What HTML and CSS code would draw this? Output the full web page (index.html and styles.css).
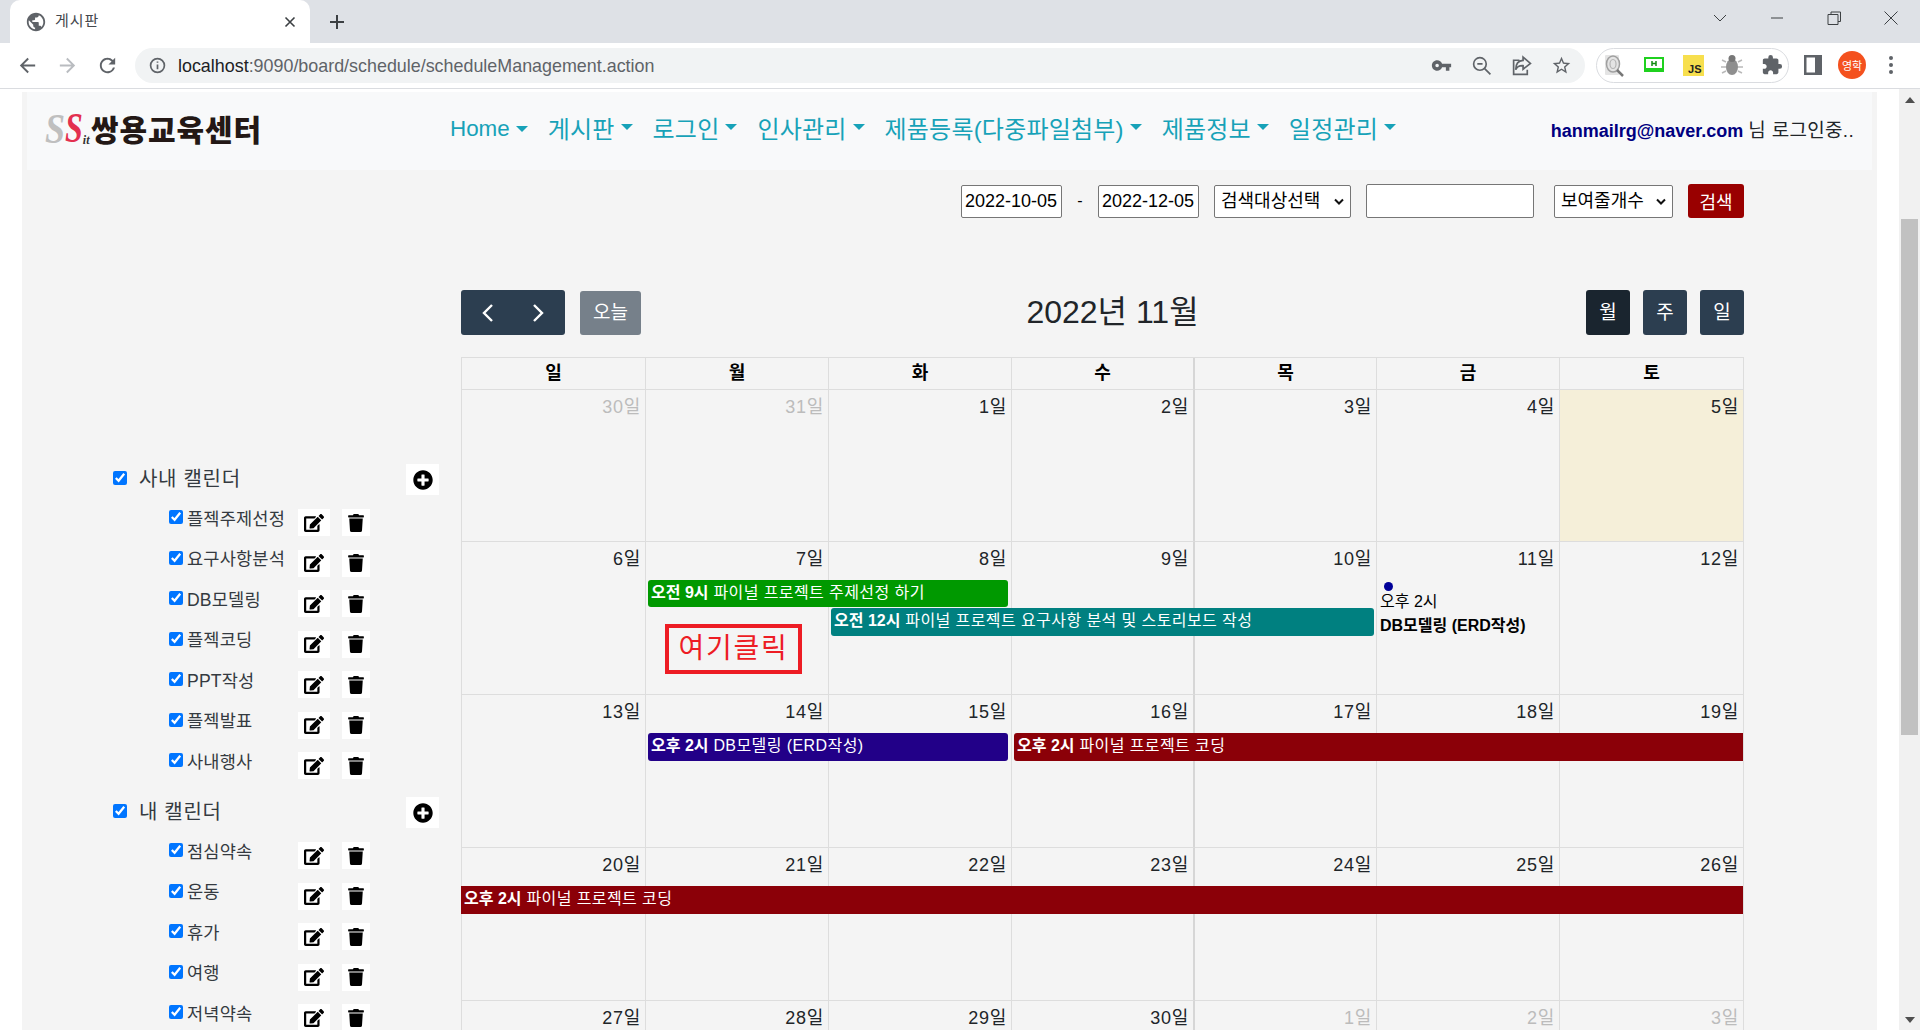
FILE: index.html
```html
<!DOCTYPE html>
<html lang="ko">
<head>
<meta charset="utf-8">
<title>게시판</title>
<link rel="stylesheet" href="styles.css">
</head>
<body>
<svg class="defs" width="0" height="0" aria-hidden="true">
  <symbol id="i-edit" viewBox="0 0 576 512"><path d="M402.6 83.2l90.2 90.2c3.8 3.8 3.8 10 0 13.8L274.4 405.6l-92.8 10.3c-12.4 1.4-22.9-9.1-21.5-21.5l10.3-92.8L388.8 83.2c3.8-3.8 10-3.8 13.8 0zm162-22.9l-48.8-48.8c-15.2-15.2-39.9-15.2-55.2 0l-35.4 35.4c-3.8 3.8-3.8 10 0 13.8l90.2 90.2c3.8 3.8 10 3.8 13.8 0l35.4-35.4c15.2-15.3 15.2-40 0-55.2zM384 346.2V448H64V128h229.8c3.2 0 6.2-1.3 8.5-3.5l40-40c7.6-7.6 2.2-20.5-8.5-20.5H48C21.5 64 0 85.5 0 112v352c0 26.5 21.5 48 48 48h352c26.5 0 48-21.5 48-48V306.2c0-10.7-12.9-16-20.5-8.5l-40 40c-2.2 2.3-3.5 5.3-3.5 8.5z"/></symbol>
  <symbol id="i-trash" viewBox="0 0 448 512"><path d="M432 32H312l-9.4-18.7A24 24 0 0 0 281.1 0H166.8a23.72 23.72 0 0 0-21.4 13.3L136 32H16A16 16 0 0 0 0 48v32a16 16 0 0 0 16 16h416a16 16 0 0 0 16-16V48a16 16 0 0 0-16-16zM53.2 467a48 48 0 0 0 47.9 45h245.8a48 48 0 0 0 47.9-45L416 128H32z"/></symbol>
  <symbol id="i-plus" viewBox="0 0 512 512"><path d="M256 8C119 8 8 119 8 256s111 248 248 248 248-111 248-248S393 8 256 8zm144 276c0 6.6-5.4 12-12 12h-92v92c0 6.6-5.4 12-12 12h-56c-6.6 0-12-5.4-12-12v-92h-92c-6.6 0-12-5.4-12-12v-56c0-6.6 5.4-12 12-12h92v-92c0-6.6 5.4-12 12-12h56c6.6 0 12 5.4 12 12v92h92c6.6 0 12 5.4 12 12v56z"/></symbol>
</svg>

<header class="chrome">
  <div class="tabstrip">
    <div class="tab">
      <svg class="favicon" viewBox="0 0 24 24"><path d="M12 2C6.48 2 2 6.48 2 12s4.48 10 10 10 10-4.48 10-10S17.52 2 12 2zm-1 17.93c-3.95-.49-7-3.85-7-7.93 0-.62.08-1.21.21-1.79L9 15v1c0 1.1.9 2 2 2v1.93zm6.9-2.54c-.26-.81-1-1.39-1.9-1.39h-1v-3c0-.55-.45-1-1-1H8v-2h2c.55 0 1-.45 1-1V7h2c1.1 0 2-.9 2-2v-.41c2.93 1.19 5 4.06 5 7.41 0 2.08-.8 3.97-2.1 5.39z"/></svg>
      <span class="tab-title">게시판</span>
      <svg class="tab-close" viewBox="0 0 12 12"><path d="M1.5 1.5l9 9m0-9l-9 9"/></svg>
    </div>
    <svg class="new-tab" viewBox="0 0 16 16"><path d="M8 1v14M1 8h14"/></svg>
    <div class="win">
      <svg class="win-i" viewBox="0 0 16 16"><path d="M2 5l6 6 6-6"/></svg>
      <svg class="win-i" viewBox="0 0 16 16"><path d="M2 8h12"/></svg>
      <svg class="win-i" viewBox="0 0 16 16"><path d="M2 4.5h10v10H2zM5 4.500V2h9.500v9.500H12"/></svg>
      <svg class="win-i" viewBox="0 0 16 16"><path d="M1.500 1.500l13 13m0-13l-13 13"/></svg>
    </div>
  </div>
  <div class="toolbar">
    <svg class="nav-i" viewBox="0 0 24 24"><path d="M20 11H7.830l5.590-5.590L12 4l-8 8 8 8 1.410-1.410L7.830 13H20v-2z"/></svg>
    <svg class="nav-i off" viewBox="0 0 24 24"><path d="M4 11h12.170l-5.590-5.590L12 4l8 8-8 8-1.410-1.410L16.170 13H4v-2z"/></svg>
    <svg class="nav-i" viewBox="0 0 24 24"><path d="M17.650 6.350A7.960 7.960 0 0 0 12 4c-4.420 0-7.990 3.580-7.990 8s3.570 8 7.990 8c3.730 0 6.840-2.550 7.730-6h-2.080A5.990 5.990 0 0 1 12 18c-3.310 0-6-2.690-6-6s2.690-6 6-6c1.660 0 3.140.690 4.220 1.780L13 11h7V4l-2.350 2.350z"/></svg>
    <div class="omnibox">
      <svg class="info" viewBox="0 0 16 16"><circle cx="8" cy="8" r="6.500"/><path d="M8 7v4.500M8 4.200v1.300"/></svg>
      <span class="url"><b>localhost</b>:9090/board/schedule/scheduleManagement.action</span>
      <svg class="omni-i omni-first" viewBox="0 0 24 24"><path d="M12.650 10A6 6 0 0 0 7 6c-3.310 0-6 2.690-6 6s2.690 6 6 6a6 6 0 0 0 5.650-4H17v4h4v-4h2v-4H12.650zM7 14c-1.100 0-2-.9-2-2s.9-2 2-2 2 .9 2 2-.9 2-2 2z"/></svg>
      <svg class="omni-s" viewBox="0 0 20 20"><circle cx="8.500" cy="8.500" r="6"/><path d="M13 13l5.500 5.500M6 8.500h5"/></svg>
      <svg class="omni-s" viewBox="0 0 20 20"><path d="M8 5H2.500v13.500h13V14M11.500 2l7 6-7 5.500V10.200C7.500 10 5.500 11.500 4.500 14c0-5 2.500-8.500 7-8.800z"/></svg>
      <svg class="omni-i" viewBox="0 0 24 24"><path d="M22 9.240l-7.190-.62L12 2 9.190 8.630 2 9.240l5.460 4.730L5.820 21 12 17.270 18.180 21l-1.630-7.030L22 9.240zM12 15.400l-3.760 2.270 1-4.280-3.320-2.880 4.380-.38L12 6.100l1.710 4.040 4.380.38-3.320 2.880 1 4.280L12 15.400z"/></svg>
    </div>
    <div class="ext-pill">
      <svg class="ext" viewBox="0 0 22 24"><rect x="2" y="2" width="14" height="20" rx="1" fill="#e4e4e4"/><ellipse cx="10" cy="11" rx="6.500" ry="8" fill="none" stroke="#a0a0a0" stroke-width="1.500"/><ellipse cx="10" cy="11" rx="3" ry="4.500" fill="none" stroke="#b5b5b5" stroke-width="1.200"/><path d="M14 17l6 6" stroke="#777" stroke-width="2.500"/></svg>
      <svg class="ext" viewBox="0 0 22 24"><rect x="2" y="5" width="18" height="13" fill="#fff" stroke="#1fd11f" stroke-width="2"/><rect x="2" y="15" width="18" height="3" fill="#1fd11f"/><path d="M9 8v5m4-5v5M9 10.500h4" stroke="#128a12" stroke-width="1.500"/></svg>
      <span class="js">JS</span>
      <svg class="ext" viewBox="0 0 22 24"><ellipse cx="11" cy="14" rx="6" ry="8" fill="#8f8f8f"/><circle cx="11" cy="5.500" r="3.500" fill="#777"/><path d="M5 9L1 7m4 7H0m5 4l-4 2m16-11l4-2m-4 7h5m-5 4l4 2" stroke="#b9b9b9" stroke-width="1.500"/></svg>
      <svg class="ext" viewBox="0 0 24 24"><path fill="#5f6368" d="M20.500 11H19V7c0-1.100-.9-2-2-2h-4V3.500a2.500 2.500 0 0 0-5 0V5H4c-1.100 0-1.990.9-1.990 2v3.800H3.500c1.490 0 2.700 1.210 2.700 2.700s-1.210 2.700-2.700 2.700H2V20c0 1.100.9 2 2 2h3.800v-1.500c0-1.490 1.210-2.700 2.700-2.700 1.490 0 2.700 1.210 2.700 2.700V22H17c1.100 0 2-.9 2-2v-4h1.500a2.500 2.500 0 0 0 0-5z"/></svg>
    </div>
    <svg class="side-i" viewBox="0 0 18 20"><path fill-rule="evenodd" d="M0 0h18v20H0zM2.500 2.500v15H11v-15z"/></svg>
    <span class="avatar">영학</span>
    <svg class="dots" viewBox="0 0 4 20"><circle cx="2" cy="3" r="2"/><circle cx="2" cy="10" r="2"/><circle cx="2" cy="17" r="2"/></svg>
  </div>
</header>

<div class="viewport">
  <div class="page">
    <div class="container">
      <nav class="navbar">
        <a class="brand">
          <span class="brand-mark"><i class="s1">S</i><i class="s2">S</i><i class="s3">it</i></span>
          <span class="brand-name">쌍용교육센터</span>
        </a>
        <ul class="menu">
          <li class="menu-item">Home</li>
          <li class="menu-item">게시판</li>
          <li class="menu-item">로그인</li>
          <li class="menu-item">인사관리</li>
          <li class="menu-item">제품등록(다중파일첨부)</li>
          <li class="menu-item">제품정보</li>
          <li class="menu-item">일정관리</li>
        </ul>
        <div class="login"><b>hanmailrg@naver.com</b> <span class="login-t">님 로그인중..</span></div>
      </nav>

      <form class="search">
        <input class="ctl date" type="text" value="2022-10-05">
        <span class="dash">-</span>
        <input class="ctl date" type="text" value="2022-12-05">
        <select class="ctl sel sel-a"><option>검색대상선택</option></select>
        <input class="ctl word" type="text">
        <select class="ctl sel sel-b"><option>보여줄개수</option></select>
        <button class="go" type="button">검색</button>
      </form>

      <div class="main">
        <aside class="side">
          <section class="group">
            <div class="group-head">
              <label class="group-label"><input type="checkbox" checked>사내 캘린더</label>
              <span class="box box-plus"><svg class="ic-plus"><use href="#i-plus"/></svg></span>
            </div>
            <div class="item"><label class="item-label"><input type="checkbox" checked>플젝주제선정</label><span class="box box-edit"><svg class="ic-edit"><use href="#i-edit"/></svg></span><span class="box box-trash"><svg class="ic-trash"><use href="#i-trash"/></svg></span></div>
            <div class="item"><label class="item-label"><input type="checkbox" checked>요구사항분석</label><span class="box box-edit"><svg class="ic-edit"><use href="#i-edit"/></svg></span><span class="box box-trash"><svg class="ic-trash"><use href="#i-trash"/></svg></span></div>
            <div class="item"><label class="item-label"><input type="checkbox" checked>DB모델링</label><span class="box box-edit"><svg class="ic-edit"><use href="#i-edit"/></svg></span><span class="box box-trash"><svg class="ic-trash"><use href="#i-trash"/></svg></span></div>
            <div class="item"><label class="item-label"><input type="checkbox" checked>플젝코딩</label><span class="box box-edit"><svg class="ic-edit"><use href="#i-edit"/></svg></span><span class="box box-trash"><svg class="ic-trash"><use href="#i-trash"/></svg></span></div>
            <div class="item"><label class="item-label"><input type="checkbox" checked>PPT작성</label><span class="box box-edit"><svg class="ic-edit"><use href="#i-edit"/></svg></span><span class="box box-trash"><svg class="ic-trash"><use href="#i-trash"/></svg></span></div>
            <div class="item"><label class="item-label"><input type="checkbox" checked>플젝발표</label><span class="box box-edit"><svg class="ic-edit"><use href="#i-edit"/></svg></span><span class="box box-trash"><svg class="ic-trash"><use href="#i-trash"/></svg></span></div>
            <div class="item"><label class="item-label"><input type="checkbox" checked>사내행사</label><span class="box box-edit"><svg class="ic-edit"><use href="#i-edit"/></svg></span><span class="box box-trash"><svg class="ic-trash"><use href="#i-trash"/></svg></span></div>
          </section>
          <section class="group group-next">
            <div class="group-head">
              <label class="group-label"><input type="checkbox" checked>내 캘린더</label>
              <span class="box box-plus"><svg class="ic-plus"><use href="#i-plus"/></svg></span>
            </div>
            <div class="item"><label class="item-label"><input type="checkbox" checked>점심약속</label><span class="box box-edit"><svg class="ic-edit"><use href="#i-edit"/></svg></span><span class="box box-trash"><svg class="ic-trash"><use href="#i-trash"/></svg></span></div>
            <div class="item"><label class="item-label"><input type="checkbox" checked>운동</label><span class="box box-edit"><svg class="ic-edit"><use href="#i-edit"/></svg></span><span class="box box-trash"><svg class="ic-trash"><use href="#i-trash"/></svg></span></div>
            <div class="item"><label class="item-label"><input type="checkbox" checked>휴가</label><span class="box box-edit"><svg class="ic-edit"><use href="#i-edit"/></svg></span><span class="box box-trash"><svg class="ic-trash"><use href="#i-trash"/></svg></span></div>
            <div class="item"><label class="item-label"><input type="checkbox" checked>여행</label><span class="box box-edit"><svg class="ic-edit"><use href="#i-edit"/></svg></span><span class="box box-trash"><svg class="ic-trash"><use href="#i-trash"/></svg></span></div>
            <div class="item"><label class="item-label"><input type="checkbox" checked>저녁약속</label><span class="box box-edit"><svg class="ic-edit"><use href="#i-edit"/></svg></span><span class="box box-trash"><svg class="ic-trash"><use href="#i-trash"/></svg></span></div>
          </section>
        </aside>

        <section class="calendar">
          <div class="cal-bar">
            <div class="cal-left">
              <div class="pager">
                <svg class="chev" viewBox="0 0 12 20"><path d="M10 2L2 10l8 8"/></svg>
                <svg class="chev" viewBox="0 0 12 20"><path d="M2 2l8 8-8 8"/></svg>
              </div>
              <button class="today" type="button">오늘</button>
            </div>
            <h2 class="cal-title">2022년 11월</h2>
            <div class="views">
              <button class="view view-on" type="button">월</button>
              <button class="view" type="button">주</button>
              <button class="view" type="button">일</button>
            </div>
          </div>

          <div class="grid">
            <div class="cols head">
              <div class="th">일</div><div class="th">월</div><div class="th">화</div><div class="th th-mid">수</div><div class="th">목</div><div class="th">금</div><div class="th">토</div>
            </div>

            <div class="week cols">
              <div class="td off">30일</div><div class="td off">31일</div><div class="td">1일</div><div class="td td-mid">2일</div><div class="td">3일</div><div class="td">4일</div><div class="td sat">5일</div>
            </div>

            <div class="week cols">
              <div class="td">6일</div><div class="td">7일</div><div class="td">8일</div><div class="td td-mid">9일</div><div class="td">10일</div><div class="td">11일</div><div class="td">12일</div>
              <div class="events cols">
                <div class="ev ev-green ev-row1 c2-3">오전 9시<span class="ev-t"> 파이널 프로젝트 주제선정 하기</span></div>
                <div class="ev ev-teal ev-row2 c3-6">오전 12시<span class="ev-t"> 파이널 프로젝트 요구사항 분석 및 스토리보드 작성</span></div>
                <div class="dot-ev c6">
                  <i class="dot"></i>
                  <span class="dot-time">오후 2시</span>
                  <b class="dot-title">DB모델링 (ERD작성)</b>
                </div>
                <div class="callout">여기클릭</div>
              </div>
            </div>

            <div class="week cols">
              <div class="td">13일</div><div class="td">14일</div><div class="td">15일</div><div class="td td-mid">16일</div><div class="td">17일</div><div class="td">18일</div><div class="td">19일</div>
              <div class="events cols">
                <div class="ev ev-purple ev-low c2-3">오후 2시<span class="ev-t"> DB모델링 (ERD작성)</span></div>
                <div class="ev ev-red ev-low ev-open c4-7">오후 2시<span class="ev-t"> 파이널 프로젝트 코딩</span></div>
              </div>
            </div>

            <div class="week cols">
              <div class="td">20일</div><div class="td">21일</div><div class="td">22일</div><div class="td td-mid">23일</div><div class="td">24일</div><div class="td">25일</div><div class="td">26일</div>
              <div class="events cols">
                <div class="ev ev-red ev-low ev-full c1-7">오후 2시<span class="ev-t"> 파이널 프로젝트 코딩</span></div>
              </div>
            </div>

            <div class="week cols">
              <div class="td">27일</div><div class="td">28일</div><div class="td">29일</div><div class="td td-mid">30일</div><div class="td off">1일</div><div class="td off">2일</div><div class="td off">3일</div>
            </div>
          </div>
        </section>
      </div>
    </div>
  </div>
  <div class="scrollbar">
    <span class="arrow-up"></span>
    <div class="thumb"></div>
    <span class="arrow-down"></span>
  </div>
</div>
</body>
</html>
```

FILE: styles.css
```css
* { box-sizing: border-box; }
html, body { margin: 0; height: 1030px; overflow: hidden; }
body {
  display: flex;
  flex-direction: column;
  background: #fff;
  color: #000;
  font-family: "Liberation Sans", "Noto Sans CJK KR", sans-serif;
  font-size: 16px;
}
.defs { position: absolute; }

/* browser chrome */
.chrome { flex: none; }
.tabstrip { height: 43px; background: #dee1e6; display: flex; align-items: flex-start; padding-left: 10px; }
.tab { width: 300px; height: 43px; background: #fff; border-radius: 10px 10px 0 0; display: flex; align-items: center; padding: 0 14px 0 15px; }
.favicon { width: 22px; height: 22px; fill: #5f6368; flex: none; }
.tab-title { margin-left: 8px; font-size: 15px; color: #45484d; flex: 1; letter-spacing: 1px; margin-top: -5px; }
.tab-close { width: 12px; height: 12px; fill: none; stroke: #3c4043; stroke-width: 1.6; }
.new-tab { width: 16px; height: 16px; margin: 14px 0 0 19px; fill: none; stroke: #3c4043; stroke-width: 2; flex: none; }
.win { margin-left: auto; display: flex; padding-right: 21px; padding-top: 10px; }
.win-i { width: 16px; height: 16px; fill: none; stroke: #3c4043; stroke-width: 1; margin-left: 41px; }

.toolbar { height: 46px; background: #fff; border-bottom: 1px solid #dadce0; display: flex; align-items: center; padding-left: 16px; padding-bottom: 1px; }
.nav-i { width: 23px; height: 23px; fill: #5f6368; margin-right: 17px; flex: none; }
.nav-i.off { fill: #b9bcc0; }
.omnibox { width: 1450px; height: 35px; border-radius: 18px; background: #f1f3f4; display: flex; align-items: center; padding-left: 14px; margin-left: -1px; flex: none; }
.info { width: 17px; height: 17px; fill: none; stroke: #5f6368; stroke-width: 1.6; flex: none; }
.url { margin-left: 12px; font-size: 17.9px; color: #5f6368; white-space: nowrap; position: relative; top: 1px; }
.url b { font-weight: 400; color: #202124; }
.omni-i { width: 21px; height: 21px; fill: #5f6368; flex: none; margin-left: 19px; }
.omni-first { margin-left: auto; }
.omni-s { width: 21px; height: 21px; fill: none; stroke: #5f6368; stroke-width: 1.6; flex: none; margin-left: 19px; }
.omni-i:last-child { margin-right: 13px; }
.ext-pill { width: 193px; height: 35px; margin-left: 11px; border: 1px solid #dadce0; border-radius: 18px; display: flex; align-items: center; justify-content: space-between; padding: 0 5px 0 6px; flex: none; }
.ext { width: 22px; height: 24px; flex: none; }
.js { width: 21px; height: 21px; background: #f7df4e; font-size: 11px; font-weight: 700; color: #222; display: flex; align-items: flex-end; justify-content: flex-end; padding-right: 2px; line-height: 14px; flex: none; }
.side-i { width: 18px; height: 20px; fill: #5f6368; margin-left: 15px; flex: none; }
.avatar { width: 28px; height: 28px; border-radius: 50%; background: #f4511e; color: #fff; font-size: 11px; display: flex; align-items: center; justify-content: center; margin-left: 16px; flex: none; }
.dots { width: 4px; height: 20px; fill: #5f6368; margin-left: 23px; flex: none; }

/* page */
.viewport { flex: 1; display: flex; min-height: 0; }
.page { flex: 1; min-width: 0; padding: 3px 22px 0; overflow: hidden; }
.container { height: 100%; background: #f4f4f4; padding: 0 5px; overflow: hidden; }

.navbar { height: 78px; background: #f8f9fa; display: flex; align-items: center; position: relative; }
.brand { display: flex; align-items: center; margin-left: 18px; width: 405px; flex: none; }
.brand-mark { display: flex; align-items: flex-end; width: 46px; height: 32px; font-family: "Liberation Serif", serif; font-weight: 700; line-height: 30px; flex: none; }
.brand-mark i { display: block; }
.s1 { font-size: 36px; color: #bfbfbf; transform: scaleY(1.2); transform-origin: 50% 100%; }
.s2 { font-size: 32px; color: #e3304f; transform: scaleY(1.35); transform-origin: 50% 100%; }
.s3 { font-size: 12px; color: #333; line-height: 14px; }
.brand-name { font-size: 30px; font-weight: 900; color: #231815; letter-spacing: .9px; line-height: 32px; white-space: nowrap; }
.menu { list-style: none; margin: 0; padding: 0; display: flex; font-size: 24px; color: #17a2b8; position: relative; top: -4px; }
.menu-item { display: flex; align-items: center; margin-right: 20px; letter-spacing: .2px; white-space: nowrap; }
.menu-item:first-child { letter-spacing: 0; font-size: 22.4px; padding-top: 4px; }
.menu-item::after { content: ""; margin-left: 6px; border-top: 6.7px solid #17a2b8; border-left: 6.7px solid transparent; border-right: 6.700px solid transparent; }
.login { margin-left: auto; margin-right: 18px; font-size: 18px; white-space: nowrap; position: relative; top: -3px; color: #212529; }
.login b { color: #000080; }
.login-t { font-size: 19px; letter-spacing: .3px; }

.search { display: flex; align-items: center; height: 34px; margin: 14px 128px 0 0; justify-content: flex-end; }
.ctl { font-family: inherit; font-size: 18px; height: 33px; border: 1px solid #767676; border-radius: 2px; background: #fff; color: #000; padding: 0 3px; flex: none; }
.date { width: 101px; }
.dash { width: 36px; text-align: center; font-size: 16px; flex: none; }
.sel {
  appearance: none;
  padding: 0 18px 0 6px;
  background: #fff url("data:image/svg+xml,%3Csvg xmlns='http://www.w3.org/2000/svg' width='10' height='7' viewBox='0 0 10 7'%3E%3Cpath d='M1 1.500l4 4 4-4' fill='none' stroke='%23111' stroke-width='2'/%3E%3C/svg%3E") no-repeat right 6px center;
}
.sel-a { width: 137px; margin-left: 15px; }
.word { width: 168px; margin-left: 15px; height: 34px; }
.sel-b { width: 119px; margin-left: 20px; }
.go { width: 56px; height: 34px; margin-left: 15px; border: 0; border-radius: 3px; background: #990000; color: #fff; font: inherit; font-size: 18px; flex: none; padding: 0; }

.main { display: flex; margin-top: 72px; }
.side { width: 434px; flex: none; padding: 174px 0 0 86px; }
.group-next { margin-top: 4.500px; }
.group-head { display: flex; height: 31px; margin-bottom: 14px; }
.group-label { display: flex; align-items: center; width: 293px; height: 27px; font-size: 20px; color: #343a40; letter-spacing: .7px; }
.group-label input { width: 14px; height: 14px; margin: 0 12px 0 0; }
.box { background: #fff; display: flex; align-items: center; justify-content: center; flex: none; }
.box-plus { width: 33px; height: 31px; }
.ic-plus { width: 20px; height: 20px; }
.item { height: 40.500px; display: flex; align-items: flex-start; padding-left: 56px; }
.item-label { width: 129px; height: 16px; display: flex; align-items: center; font-size: 17.6px; color: #343a40; flex: none; white-space: nowrap; letter-spacing: .15px; }
.item-label input { width: 14px; height: 14px; margin: 0 4px 0 0; flex: none; }
.box-edit { width: 32px; height: 27px; }
.box-trash { width: 28px; height: 27px; margin-left: 12px; }
.ic-edit { width: 20px; height: 18px; }
.ic-trash { width: 16px; height: 18px; }

.calendar { width: 1283px; flex: none; }
.cal-bar { display: flex; justify-content: space-between; align-items: flex-start; height: 67px; }
.cal-left { display: flex; align-items: flex-start; gap: 15px; width: 320px; }
.pager { width: 104px; height: 45px; background: #2c3e50; border-radius: 3px; display: flex; align-items: center; justify-content: space-between; padding: 0 21px; flex: none; }
.chev { width: 12px; height: 20px; fill: none; stroke: #fff; stroke-width: 2.4; }
.today { width: 61px; height: 44px; margin-top: 1px; border: 0; border-radius: 3px; background: #76808a; color: #fff; font: inherit; font-size: 19px; padding: 0 0 5px; flex: none; }
.cal-title { margin: 0; font-size: 32px; line-height: 45px; font-weight: 400; color: #212529; white-space: nowrap; }
.views { display: flex; gap: 13px; width: 300px; justify-content: flex-end; }
.view { width: 44px; height: 45px; border: 0; border-radius: 3px; background: #2c3e50; color: #fff; font: inherit; font-size: 19px; padding: 0 0 5px; }
.view-on { background: #1a252f; }

.grid { border-top: 1px solid #ddd; border-left: 1px solid #ddd; }
.cols { display: grid; grid-template-columns: 184px 183px 183px 183px 182px 183px 184px; }
.th { height: 32px; border-right: 1px solid #ddd; border-bottom: 1px solid #ddd; text-align: center; font-weight: 700; font-size: 18px; line-height: 30px; }
.th-mid, .td-mid { border-right-width: 2px !important; border-right-color: #d6d6d6 !important; }
.week { position: relative; height: 153px; }
.head + .week { height: 152px; }
.td { border-right: 1px solid #ddd; border-bottom: 1px solid #ddd; text-align: right; padding: 4px 4px 0 0; font-size: 18px; line-height: 26px; color: #212529; letter-spacing: .7px; }
.td.off { color: #bcbcbc; }
.td.sat { background: #f5efd9; }

.events { position: absolute; inset: 0 0 0 -1px; pointer-events: none; align-content: start; width: 1282px; }
.ev { height: 28px; border-radius: 3px; color: #fff; font-size: 16px; font-weight: 700; line-height: 26px; padding-left: 3px; white-space: nowrap; }
.ev-t { font-weight: 400; letter-spacing: .42px; }
.ev-row1 { grid-row: 1; margin: 38px 3px 0 3px; height: 27px; }
.ev-row2 { grid-row: 1; margin: 66px 2px 0 3px; }
.ev-low { grid-row: 1; margin: 38px 3px 0 3px; }
.ev-open { margin-right: 0; border-radius: 3px 0 0 3px; }
.ev-full { margin-left: 0; margin-right: 0; border-radius: 0; padding-left: 3px; }
.c2-3 { grid-column: 2 / 4; }
.c3-6 { grid-column: 3 / 6; }
.c4-7 { grid-column: 4 / 8; }
.c1-7 { grid-column: 1 / 8; }
.c6 { grid-column: 6; }
.ev-green { background: #009900; }
.ev-teal { background: #008080; }
.ev-purple { background: #220088; }
.ev-red { background: #8b0008; }

.dot-ev { grid-row: 1; margin: 40px 0 0 4px; display: flex; flex-direction: column; font-size: 16px; color: #000; }
.dot { width: 9px; height: 9px; border-radius: 50%; background: #000099; margin-left: 4px; }
.dot-time { line-height: 18px; margin-top: 2px; }
.dot-title { line-height: 18px; margin-top: 6px; white-space: nowrap; }

.callout { grid-row: 1; grid-column: 2; align-self: start; justify-self: start; margin: 82px 0 0 20px; width: 137px; height: 50px; border: 4px solid #ed1c24; color: #ed1c24; font-size: 28px; line-height: 41px; text-align: center; letter-spacing: 1.7px; background: #f4f4f4; white-space: nowrap; }

/* page scrollbar */
.scrollbar { width: 21px; flex: none; background: #f1f1f1; display: flex; flex-direction: column; align-items: center; position: relative; }
.arrow-up { width: 0; height: 0; margin-top: 8px; border-left: 5px solid transparent; border-right: 5px solid transparent; border-bottom: 6px solid #505050; }
.thumb { width: 17px; height: 516px; margin-top: 116px; background: #c1c1c1; }
.arrow-down { width: 0; height: 0; margin-top: auto; margin-bottom: 7px; border-left: 5px solid transparent; border-right: 5px solid transparent; border-top: 6px solid #505050; }
```
